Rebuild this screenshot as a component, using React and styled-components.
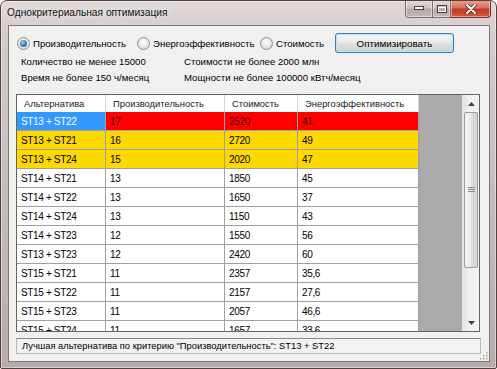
import React from 'react';
import styled, { createGlobalStyle } from 'styled-components';

const GlobalStyle = createGlobalStyle`
  html, body { margin: 0; padding: 0; background: #ffffff; }
  body { font-family: "Liberation Sans", Arial, sans-serif; color: #000; }
  #root { width: 497px; height: 369px; }
`;

const Window = styled.div`
  box-sizing: border-box;
  width: 497px;
  height: 369px;
  display: flex;
  flex-direction: column;
  border: 1px solid #54423f;
  border-radius: 7px 7px 2px 2px;
  background: linear-gradient(180deg, #e0d9d9 0%, #d4cbcb 10%, #c6bbbb 55%, #b9abab 100%);
  box-shadow: inset 0 0 0 1px rgba(255, 255, 255, 0.45);
  overflow: hidden;
  position: relative;
`;

const TitleBar = styled.div`
  flex: none;
  height: 24px;
  display: flex;
  align-items: flex-start;
`;

const Title = styled.div`
  padding: 6px 0 0 6px;
  font-size: 10.2px;
  line-height: 12px;
  color: #111;
  text-shadow: 0 0 5px rgba(255, 255, 255, 0.95);
`;

const Controls = styled.div`
  margin-left: auto;
  margin-right: 5px;
  margin-top: -1px;
  display: flex;
`;

const CtrlButton = styled.div`
  box-sizing: border-box;
  width: ${p => p.$w}px;
  height: 18px;
  display: flex;
  align-items: center;
  justify-content: center;
  border: 1px solid ${p => (p.$close ? '#7a2a22' : '#7d6e6e')};
  border-top: none;
  border-left: ${p => (p.$first ? '1px solid #7d6e6e' : 'none')};
  border-radius: ${p => (p.$first ? '0 0 0 4px' : p.$close ? '0 0 4px 0' : '0')};
  background: ${p =>
    p.$close
      ? 'linear-gradient(180deg, #e9a596 0%, #d8705e 45%, #c13b26 55%, #d2583f 100%)'
      : 'linear-gradient(180deg, #e4dede 0%, #cdc4c4 45%, #b4a8a8 55%, #c2b8b8 100%)'};
  box-shadow: inset 0 0 0 1px rgba(255, 255, 255, 0.45);
`;

const Client = styled.div`
  flex: 1;
  margin: 0 6px 6px 7px;
  background: #f0f0f0;
  border: 1px solid #857676;
  display: flex;
  flex-direction: column;
  padding: 7px 9px 0 7px;
  position: relative;
`;

const TopRow = styled.div`
  display: flex;
  align-items: center;
  height: 20px;
`;

const RadioOption = styled.label`
  box-sizing: border-box;
  width: ${p => p.$w}px;
  padding-left: 1px;
  display: flex;
  align-items: center;
  gap: 3px;
  font-size: 9.6px;
  color: #000;
`;

const RadioCircle = styled.span`
  box-sizing: border-box;
  width: 13px;
  height: 13px;
  border-radius: 50%;
  border: 1px solid #8c8f91;
  background: radial-gradient(circle at 50% 40%, #ffffff 0%, #eaeaea 45%, #cfcfcf 100%);
  display: flex;
  align-items: center;
  justify-content: center;
  flex: none;
  &::after {
    content: '';
    display: ${p => (p.$checked ? 'block' : 'none')};
    width: 7px;
    height: 7px;
    border-radius: 50%;
    background: radial-gradient(circle at 40% 35%, #a9d4ee 0%, #3f86bd 45%, #1b4f7c 100%);
  }
`;

const Button = styled.div`
  box-sizing: border-box;
  width: 119px;
  height: 20px;
  display: flex;
  align-items: center;
  justify-content: center;
  font-size: 9.8px;
  color: #000;
  border: 1px solid #3c7fb1;
  border-radius: 3px;
  background: linear-gradient(180deg, #f3f3f3 0%, #ebebeb 45%, #dedede 55%, #d2d2d2 100%);
  box-shadow: inset 0 0 0 1px #b6e2f7;
`;

const Info = styled.div`
  display: grid;
  grid-template-columns: 163px auto;
  padding-left: 5px;
  margin-top: 1px;
  font-size: 9.6px;
  line-height: 16px;
  color: #000;
`;

const Grid = styled.div`
  box-sizing: border-box;
  margin-top: 8px;
  height: 238px;
  border: 1px solid #646464;
  display: flex;
  background: #ababab;
  overflow: hidden;
`;

const DataArea = styled.div`
  flex: none;
  width: 402px;
  display: flex;
  flex-direction: column;
`;

const HeaderRow = styled.div`
  display: flex;
  height: 17px;
  background: #ffffff;
  flex: none;
`;

const HeaderCell = styled.div`
  box-sizing: border-box;
  width: ${p => p.$w}px;
  padding-left: 7px;
  border-right: 1px solid #d4d4d4;
  display: flex;
  align-items: center;
  font-size: 9.4px;
  color: #1a1a1a;
`;

const Row = styled.div`
  display: flex;
  height: 19px;
  flex: none;
`;

const toneBg = {
  selected: '#3399ff',
  red: '#ff0000',
  yellow: '#ffd800',
};

const Cell = styled.div`
  box-sizing: border-box;
  width: ${p => p.$w}px;
  padding-left: 4px;
  display: flex;
  align-items: center;
  border-right: 1px solid #a0a0a0;
  border-bottom: 1px solid #a0a0a0;
  background: ${p => toneBg[p.$tone] || '#ffffff'};
  color: ${p => (p.$tone === 'selected' ? '#ffffff' : p.$tone === 'red' ? '#3a0000' : '#000')};
  font-size: 10px;
  letter-spacing: -0.35px;
`;

const Filler = styled.div`
  flex: 1;
`;

const ScrollBar = styled.div`
  flex: none;
  width: 17px;
  display: flex;
  flex-direction: column;
  background: linear-gradient(90deg, #e2e2e2 0%, #f1f1f1 40%, #f3f3f3 100%);
  border-left: 1px solid #e8e8e8;
  box-sizing: border-box;
`;

const ArrowBox = styled.div`
  height: 17px;
  flex: none;
  display: flex;
  align-items: center;
  justify-content: center;
`;

const Thumb = styled.div`
  box-sizing: border-box;
  height: 156px;
  margin: 0 1px;
  border: 1px solid #9b9b9b;
  border-radius: 2px;
  background: linear-gradient(90deg, #f5f5f5 0%, #ececec 45%, #dcdcdc 55%, #d6d6d6 100%);
  display: flex;
  align-items: center;
  justify-content: center;
  flex: none;
`;

const Track = styled.div`
  flex: 1;
`;

const StatusBox = styled.div`
  box-sizing: border-box;
  margin-top: 6px;
  margin-right: -1px;
  height: 16px;
  border: 1px solid #b9b9b9;
  border-top-color: #8a8a8a;
  background: #f2f2f2;
  padding-left: 5px;
  display: flex;
  align-items: center;
  font-size: 9.35px;
  color: #000;
`;

const Grip = styled.svg`
  position: absolute;
  right: 1px;
  bottom: 1px;
`;

const columns = [
  { title: 'Альтернатива', w: 89 },
  { title: 'Производительность', w: 119 },
  { title: 'Стоимость', w: 73 },
  { title: 'Энергоэффективность', w: 121 },
];

const rows = [
  { v: ['ST13 + ST22', '17', '2520', '41'], tone: 'red' },
  { v: ['ST13 + ST21', '16', '2720', '49'], tone: 'yellow' },
  { v: ['ST13 + ST24', '15', '2020', '47'], tone: 'yellow' },
  { v: ['ST14 + ST21', '13', '1850', '45'] },
  { v: ['ST14 + ST22', '13', '1650', '37'] },
  { v: ['ST14 + ST24', '13', '1150', '43'] },
  { v: ['ST14 + ST23', '12', '1550', '56'] },
  { v: ['ST13 + ST23', '12', '2420', '60'] },
  { v: ['ST15 + ST21', '11', '2357', '35,6'] },
  { v: ['ST15 + ST22', '11', '2157', '27,6'] },
  { v: ['ST15 + ST23', '11', '2057', '46,6'] },
  { v: ['ST15 + ST24', '11', '1657', '33,6'] },
];

export default function App() {
  return (
    <>
      <GlobalStyle />
      <Window>
        <TitleBar>
          <Title>Однокритериальная оптимизация</Title>
          <Controls>
            <CtrlButton $w={28} $first>
              <svg width="10" height="5" viewBox="0 0 10 5">
                <rect x="0.5" y="0.5" width="9" height="3" fill="#ffffff" stroke="#4a3e3e" strokeWidth="1" />
              </svg>
            </CtrlButton>
            <CtrlButton $w={18}>
              <svg width="10" height="8" viewBox="0 0 10 8">
                <rect x="0.5" y="0.5" width="9" height="7" fill="none" stroke="#4a3e3e" strokeWidth="1" />
                <rect x="1.5" y="2.5" width="7" height="4" fill="none" stroke="#ffffff" strokeWidth="1" />
              </svg>
            </CtrlButton>
            <CtrlButton $w={40} $close>
              <svg width="12" height="10" viewBox="0 0 12 10">
                <path d="M2 1 L10 9 M10 1 L2 9" stroke="#5a1a10" strokeWidth="3.4" strokeLinecap="round" />
                <path d="M2 1 L10 9 M10 1 L2 9" stroke="#ffffff" strokeWidth="2" strokeLinecap="round" />
              </svg>
            </CtrlButton>
          </Controls>
        </TitleBar>
        <Client>
          <TopRow>
            <RadioOption $w={120}>
              <RadioCircle $checked />
              Производительность
            </RadioOption>
            <RadioOption $w={123}>
              <RadioCircle />
              Энергоэффективность
            </RadioOption>
            <RadioOption $w={76}>
              <RadioCircle />
              Стоимость
            </RadioOption>
            <Button>Оптимизировать</Button>
          </TopRow>
          <Info>
            <span>Количество не менее 15000</span>
            <span>Стоимости не более 2000 млн</span>
            <span>Время не более 150 ч/месяц</span>
            <span>Мощности не более 100000 кВтч/месяц</span>
          </Info>
          <Grid>
            <DataArea>
              <HeaderRow>
                {columns.map(c => (
                  <HeaderCell key={c.title} $w={c.w}>{c.title}</HeaderCell>
                ))}
              </HeaderRow>
              {rows.map((r, i) => (
                <Row key={i}>
                  {r.v.map((val, j) => (
                    <Cell
                      key={j}
                      $w={columns[j].w}
                      $tone={i === 0 && j === 0 ? 'selected' : r.tone}
                    >
                      {val}
                    </Cell>
                  ))}
                </Row>
              ))}
            </DataArea>
            <Filler />
            <ScrollBar>
              <ArrowBox>
                <svg width="7" height="4" viewBox="0 0 7 4"><path d="M0 4 L3.5 0 L7 4 Z" fill="#404040" /></svg>
              </ArrowBox>
              <Thumb>
                <svg width="7" height="6" viewBox="0 0 7 6">
                  <path d="M0 0.5 H7 M0 2.5 H7 M0 4.5 H7" stroke="#8a8a8a" strokeWidth="1" />
                </svg>
              </Thumb>
              <Track />
              <ArrowBox>
                <svg width="7" height="4" viewBox="0 0 7 4"><path d="M0 0 L3.5 4 L7 0 Z" fill="#404040" /></svg>
              </ArrowBox>
            </ScrollBar>
          </Grid>
          <StatusBox>Лучшая альтернатива по критерию "Производительность": ST13 + ST22</StatusBox>
          <Grip width="8" height="8" viewBox="0 0 8 8">
            <g fill="#a8a8a8">
              <rect x="6" y="0" width="1.5" height="1.5" />
              <rect x="3" y="3" width="1.5" height="1.5" />
              <rect x="6" y="3" width="1.5" height="1.5" />
              <rect x="0" y="6" width="1.5" height="1.5" />
              <rect x="3" y="6" width="1.5" height="1.5" />
              <rect x="6" y="6" width="1.5" height="1.5" />
            </g>
          </Grip>
        </Client>
      </Window>
    </>
  );
}
